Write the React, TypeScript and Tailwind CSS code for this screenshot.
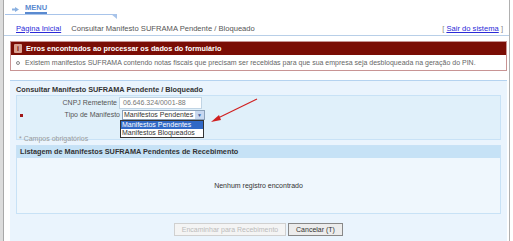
import React from "react";

const font = { fontFamily: '"Liberation Sans", Tahoma, Arial, sans-serif' };

function MenuArrow() {
  return (
    <svg width="7" height="5" viewBox="0 0 7 5" className="mr-[6px]">
      <path d="M0 1.5h3V0l4 2.5L3 5V3.5H0z" fill="#8ab0e0" />
    </svg>
  );
}

function InfoIcon() {
  return (
    <span className="mr-[4px] flex h-[9px] w-[8px] items-center justify-center rounded-[1px] bg-[#d8a090] text-[7px] font-bold leading-none text-[#7a0d05]">
      i
    </span>
  );
}

export default function App() {
  return (
    <div
      className="flex h-[241px] w-[513px] overflow-hidden bg-white text-[7px] leading-[8px] text-[#444]"
      style={font}
    >
      <div className="w-[4px] shrink-0 border-r border-[#a8a8a8] bg-[#dcdcdc]" />

      <div className="flex w-[505px] shrink-0 flex-col">
        {/* top menu */}
        <div className="flex h-[22px] flex-col pt-[4px]">
          <div className="flex items-center pl-[8px]">
            <MenuArrow />
            <span className="border-b-2 border-[#5a8ad0] pb-[1px] text-[7.5px] font-bold leading-[7px] text-[#5a8ad0]">
              MENU
            </span>
          </div>
          <div className="relative ml-[1px] h-[1px] w-[112px] bg-[#a8c4ea]">
            <div className="absolute right-0 top-0 h-0 w-0 border-l-[6px] border-t-[5px] border-l-transparent border-t-[#a8c4ea]" />
          </div>
        </div>

        {/* breadcrumb */}
        <div className="flex h-[14px] items-center justify-between border-b border-[#b8cfe8] pl-[12px] pr-[6px] text-[7.6px]">
          <div className="flex items-center gap-[10px]">
            <a className="text-[#2a2ad8] underline">Página Inicial</a>
            <span className="text-[#555]">Consultar Manifesto SUFRAMA Pendente / Bloqueado</span>
          </div>
          <span className="text-[#888]">
            [ <a className="text-[#2a2ad8] underline">Sair do sistema</a> ]
          </span>
        </div>

        {/* error box */}
        <div className="ml-[6px] mr-[2px] mt-[5px] border border-[#c89494]">
          <div className="flex h-[13px] items-center bg-[#7a0d05] pl-[3px] text-[7.3px] font-bold text-white">
            <InfoIcon />
            Erros encontrados ao processar os dados do formulário
          </div>
          <div className="flex h-[15px] items-center bg-white pl-[5px] text-[#666]">
            <span className="mr-[5px] inline-block h-[4px] w-[4px] rounded-full border border-[#888]" />
            Existem manifestos SUFRAMA contendo notas fiscais que precisam ser recebidas para que sua empresa seja desbloqueada na geração do PIN.
          </div>
        </div>

        {/* form panel */}
        <div className="relative ml-[6px] mr-[2px] mt-[9px] flex-1 border-t border-[#b5d3f0] bg-[#eaf4fd] px-[6px]">
          <div className="pt-[5px] text-[7.3px] font-bold text-[#333]">
            Consultar Manifesto SUFRAMA Pendente / Bloqueado
          </div>

          <div className="mt-[1px] h-[45px] border border-[#c8e2f6] bg-[#e0f0fa]">
            <div className="flex h-[13px] items-center">
              <span className="w-[102px] pr-[2px] text-right text-[#555]">CNPJ Remetente</span>
              <div className="flex h-[12px] w-[83px] items-center border border-[#c0d4e4] bg-white pl-[3px] text-[#777]">
                06.646.324/0001-88
              </div>
            </div>
            <div className="relative flex h-[12px] items-center">
              <span className="ml-[3px] h-[3px] w-[3px] bg-[#a01818]" />
              <span className="w-[99px] pr-[2px] text-right text-[#555]">Tipo de Manifesto</span>
              <div className="flex h-[10px] w-[83px] items-center justify-between overflow-hidden whitespace-nowrap border border-[#8aa0b8] bg-white pl-[1px]">
                <span className="text-[#333]">Manifestos Pendentes</span>
                <span className="flex h-[8px] w-[9px] shrink-0 items-center justify-center bg-[#c8d8f0] text-[5px] text-[#4060a0]">
                  ▼
                </span>
              </div>
              {/* open options list */}
              <div className="absolute left-[103px] top-[11px] z-10 w-[84px] whitespace-nowrap border border-[#333] bg-white">
                <div className="h-[8px] bg-[#3169c6] pl-[1px] text-white">Manifestos Pendentes</div>
                <div className="h-[8px] pl-[1px] text-[#333]">Manifestos Bloqueados</div>
              </div>
            </div>
            <div className="mt-[14px] pl-[2px] text-[#999]">* Campos obrigatórios</div>
          </div>

          {/* red arrow */}
          <svg
            className="absolute left-[196px] top-[14px]"
            width="56"
            height="30"
            viewBox="0 0 56 30"
          >
            <line x1="51" y1="4" x2="10" y2="24" stroke="#d02020" strokeWidth="1.2" />
            <path d="M5 27l8-7 2 5z" fill="#d02020" />
          </svg>

          {/* listing */}
          <div className="mt-[5px] border border-[#c8e2f6]">
            <div className="flex h-[12px] items-center bg-[#c6e2f6] pl-[3px] text-[7.3px] font-bold text-[#333]">
              Listagem de Manifestos SUFRAMA Pendentes de Recebimento
            </div>
            <div className="flex h-[55px] items-center justify-center bg-[#eff7fd] text-[#333]">
              Nenhum registro encontrado
            </div>
          </div>

          <div className="mt-[9px] flex gap-[2px] pl-[158px]">
            <button className="h-[13px] w-[112px] border border-[#d0d0d0] bg-[#f4f4f4] text-[7px] text-[#bbb]">
              Encaminhar para Recebimento
            </button>
            <button className="h-[13px] w-[55px] border border-[#888] bg-[#ececec] text-[7px] text-[#333]">
              Cancelar (T)
            </button>
          </div>
        </div>
      </div>

      <div className="w-[1px] shrink-0 bg-[#b0b0b0]" />
      <div className="flex-1 bg-white" />
    </div>
  );
}
